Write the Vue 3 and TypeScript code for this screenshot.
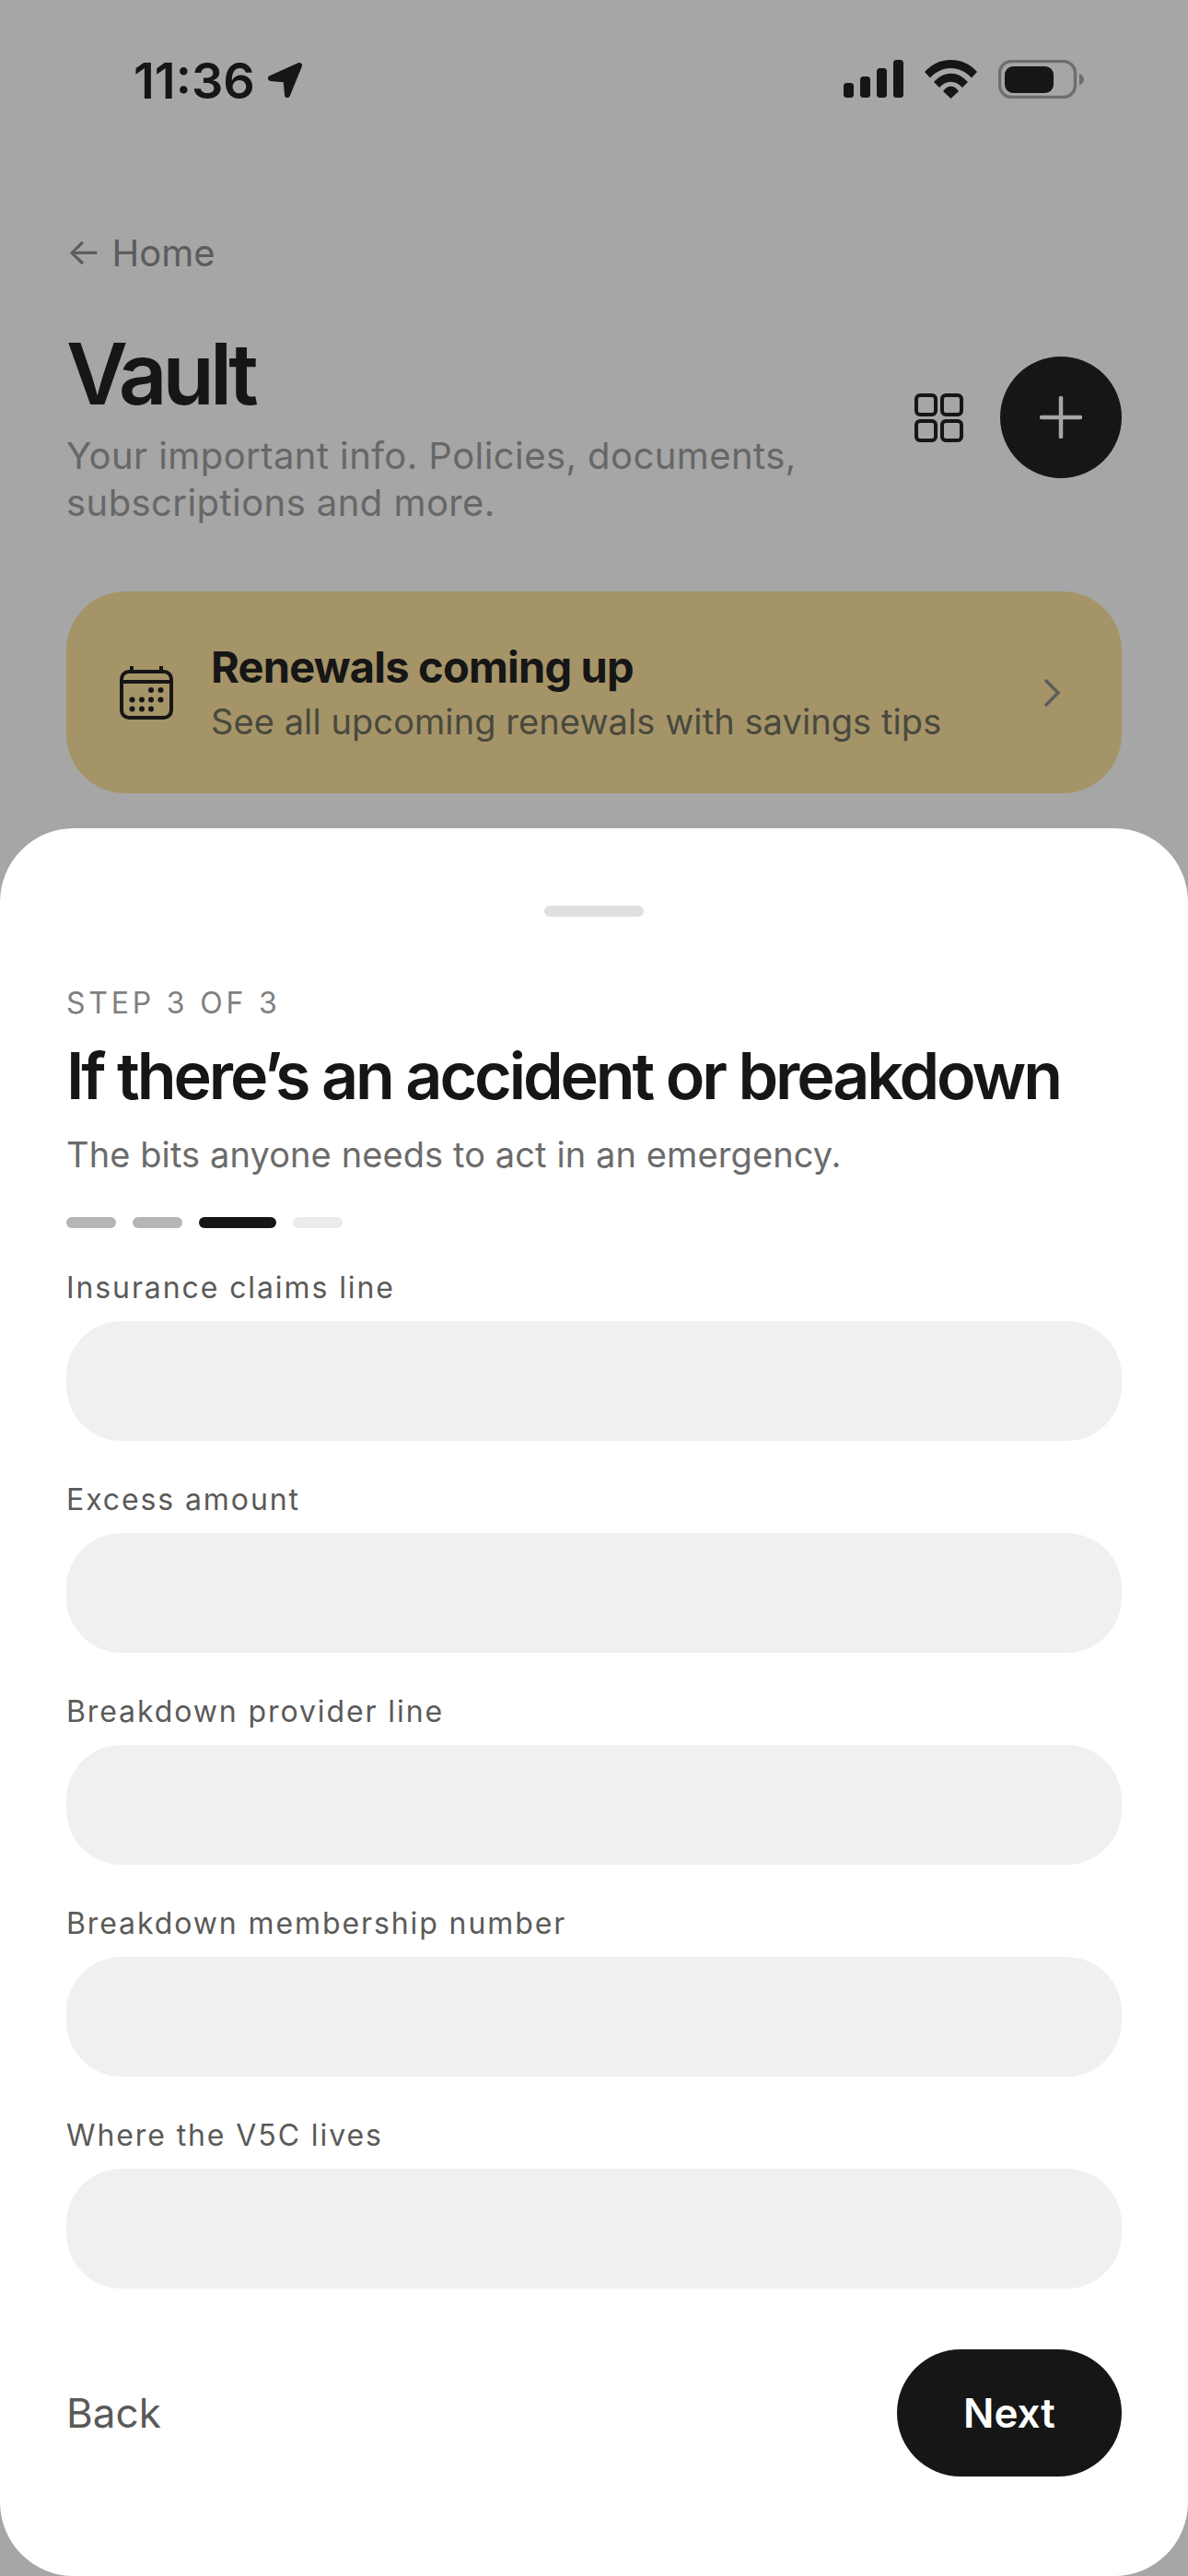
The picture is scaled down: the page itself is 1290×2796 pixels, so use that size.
<template>
  <div class="screen">
    <div class="page">
      <div class="status">
        <div class="status-left">
          <span class="time">11:36</span>
          <svg class="loc" width="40" height="41" viewBox="0 0 40 41">
            <path d="M36 5 L5 19 L21.5 20.5 L23 37 Z" fill="#222" stroke="#222" stroke-width="6" stroke-linejoin="round" />
          </svg>
        </div>
        <div class="status-right">
          <svg width="65" height="41" viewBox="0 0 65 41" fill="#222">
            <rect x="0" y="25" width="11" height="16" rx="3.5" />
            <rect x="18" y="18" width="11" height="23" rx="3.5" />
            <rect x="36" y="9" width="11" height="32" rx="3.5" />
            <rect x="54" y="0" width="11" height="41" rx="3.5" />
          </svg>
          <svg width="57" height="42" viewBox="0 0 57 42" fill="#222">
            <path d="M0 13 C15 -4.3 42 -4.3 57 13 L51 19.5 C38 5.5 19 5.5 6 19.5 Z" />
            <path d="M10 24 C21 11.5 36 11.5 47 24 L41 30 C33 21.5 24 21.5 16 30 Z" />
            <path d="M20 34 C25 27 32 27 37 34 L28.5 42 Z" />
          </svg>
          <svg width="93" height="42" viewBox="0 0 93 42">
            <rect x="1.5" y="1.5" width="82" height="39" rx="13" fill="none" stroke="#aaa" stroke-width="3.5" />
            <rect x="7" y="7" width="53" height="29" rx="9" fill="#222" />
            <path d="M88 15 C91 16 93 18 93 21 C93 24 91 26 88 28 Z" fill="#aaa" />
          </svg>
        </div>
      </div>

      <a class="home">← Home</a>

      <div class="head">
        <div class="head-text">
          <h1>Vault</h1>
          <p>Your important info. Policies, documents, subscriptions and more.</p>
        </div>
        <div class="head-actions">
          <svg width="53" height="53" viewBox="0 0 53 53" fill="none" stroke="#222" stroke-width="4">
            <rect x="2" y="2" width="21" height="21" rx="4" />
            <rect x="30" y="2" width="21" height="21" rx="4" />
            <rect x="2" y="30" width="21" height="21" rx="4" />
            <rect x="30" y="30" width="21" height="21" rx="4" />
          </svg>
          <button class="add">
            <svg width="46" height="46" viewBox="0 0 46 46" stroke="#fff" stroke-width="4.5" stroke-linecap="round">
              <path d="M23 2 V44 M2 23 H44" />
            </svg>
          </button>
        </div>
      </div>

      <div class="renewals">
        <svg width="58" height="58" viewBox="0 0 58 58" fill="none" stroke="#222" stroke-width="4">
          <rect x="2" y="6" width="54" height="50" rx="8" />
          <path d="M2 17 H56" />
          <path d="M13 1 V6 M45 1 V6" stroke-linecap="round" />
          <g fill="#222" stroke="none">
            <circle v-for="(d, i) in calendarDots" :key="i" :cx="d[0]" :cy="d[1]" r="3" />
          </g>
        </svg>
        <div class="renewals-text">
          <strong>Renewals coming up</strong>
          <span>See all upcoming renewals with savings tips</span>
        </div>
        <svg class="chevron" width="20" height="32" viewBox="0 0 20 32" fill="none" stroke="#8e8e8e" stroke-width="3.5">
          <path d="M3 2 L17 16 L3 30" />
        </svg>
      </div>
    </div>

    <div class="scrim"></div>

    <div class="sheet">
      <div class="handle"></div>
      <div class="step">STEP 3 OF 3</div>
      <h2>If there’s an accident or breakdown</h2>
      <p class="sub">The bits anyone needs to act in an emergency.</p>
      <div class="dots">
        <span class="dot done"></span>
        <span class="dot done"></span>
        <span class="dot now"></span>
        <span class="dot"></span>
      </div>
      <div class="fields">
        <label v-for="f in fields" :key="f" class="field">
          <span>{{ f }}</span>
          <input type="text" />
        </label>
      </div>
      <div class="footer">
        <button class="back">Back</button>
        <button class="next">Next</button>
      </div>
    </div>
  </div>
</template>

<script setup lang="ts">
const fields: string[] = [
  'Insurance claims line',
  'Excess amount',
  'Breakdown provider line',
  'Breakdown membership number',
  'Where the V5C lives'
]

const calendarDots: number[][] = [
  [34, 26], [44.5, 26],
  [13.5, 36.5], [24, 36.5], [34, 36.5], [44.5, 36.5],
  [13.5, 46.5], [24, 46.5], [34, 46.5]
]
</script>

<style>
html, body {
  margin: 0;
  background: #fff;
}
</style>

<style scoped>
.screen {
  position: relative;
  width: 1290px;
  height: 2796px;
  overflow: hidden;
  font-family: Inter, "Liberation Sans", sans-serif;
  background: #fff;
}

.page {
  padding: 0 72px;
}

.status {
  display: flex;
  justify-content: space-between;
  align-items: flex-start;
  height: 255px;
  padding: 65px 41px 0 73px;
  box-sizing: border-box;
}
.status-left {
  display: flex;
  align-items: center;
  gap: 12px;
}
.time {
  position: relative;
  top: 2px;
  font-size: 54px;
  line-height: 42px;
  font-weight: 600;
  color: #222;
}
.status-right {
  display: flex;
  align-items: flex-start;
  gap: 23px;
}

.home {
  display: block;
  font-size: 40px;
  line-height: 40px;
  color: #8e8e8e;
}

.head {
  display: flex;
  justify-content: space-between;
  align-items: center;
  margin-top: 55px;
}
.head h1 {
  margin: 0 0 7px;
  font-size: 92px;
  line-height: 112px;
  font-weight: 600;
  letter-spacing: -5px;
  color: #222;
}
.head p {
  margin: 0;
  width: 860px;
  font-size: 40px;
  line-height: 51px;
  letter-spacing: 0.43px;
  color: #9e9e9e;
}
.head-actions {
  display: flex;
  align-items: center;
  gap: 40px;
  margin-bottom: 15px;
}
.add {
  display: flex;
  align-items: center;
  justify-content: center;
  width: 132px;
  height: 132px;
  border: none;
  border-radius: 50%;
  background: #222;
  padding: 0;
}

.renewals {
  display: flex;
  align-items: center;
  height: 219px;
  margin-top: 71px;
  padding: 0 66px 0 58px;
  gap: 41px;
  border-radius: 64px;
  background: #fee4a0;
}
.renewals-text {
  display: flex;
  flex-direction: column;
  flex: 1;
}
.renewals-text strong {
  font-size: 47px;
  line-height: 58px;
  font-weight: 700;
  letter-spacing: -0.8px;
  color: #222;
}
.renewals-text span {
  font-size: 38px;
  line-height: 50px;
  margin-top: 5px;
  letter-spacing: 0.08px;
  color: #70705f;
}

.scrim {
  position: absolute;
  inset: 0;
  background: rgba(0, 0, 0, 0.35);
}

.sheet {
  position: absolute;
  left: 0;
  right: 0;
  top: 899px;
  bottom: 0;
  display: flex;
  flex-direction: column;
  padding: 84px 72px 0;
  border-radius: 80px;
  background: #fff;
}
.handle {
  align-self: center;
  width: 108px;
  height: 12px;
  border-radius: 6px;
  background: #e0e0e0;
}
.step {
  margin-top: 74px;
  font-size: 32px;
  line-height: 40px;
  letter-spacing: 3.8px;
  color: #808080;
}
.sheet h2 {
  margin: 17px 0 0;
  font-size: 70px;
  line-height: 84px;
  font-weight: 600;
  letter-spacing: -3.1px;
  color: #161616;
}
.sub {
  margin: 18px 0 0;
  font-size: 38px;
  line-height: 50px;
  letter-spacing: 0.1px;
  color: #6b6b6b;
}
.dots {
  display: flex;
  gap: 18px;
  margin-top: 43px;
}
.dot {
  width: 54px;
  height: 12px;
  border-radius: 6px;
  background: #ebebeb;
}
.dot.done {
  background: #b5b5b5;
}
.dot.now {
  width: 84px;
  background: #161616;
}
.fields {
  display: flex;
  flex-direction: column;
  gap: 44px;
  margin-top: 45px;
}
.field {
  display: flex;
  flex-direction: column;
  gap: 16px;
}
.field span {
  font-size: 32px;
  line-height: 40px;
  letter-spacing: 1.9px;
  color: #5a5a58;
}
.field input {
  height: 130px;
  border: none;
  border-radius: 60px;
  background: #f0f0f0;
  padding: 0 48px;
  outline: none;
}
.footer {
  display: flex;
  justify-content: space-between;
  align-items: center;
  margin-top: 66px;
}
.back,
.next {
  border: none;
  padding: 0;
  font-family: inherit;
  font-size: 44px;
}
.back {
  background: none;
  color: #5a5a58;
}
.next {
  width: 244px;
  height: 138px;
  border-radius: 69px;
  background: #161616;
  color: #fff;
  font-weight: 600;
}
</style>
